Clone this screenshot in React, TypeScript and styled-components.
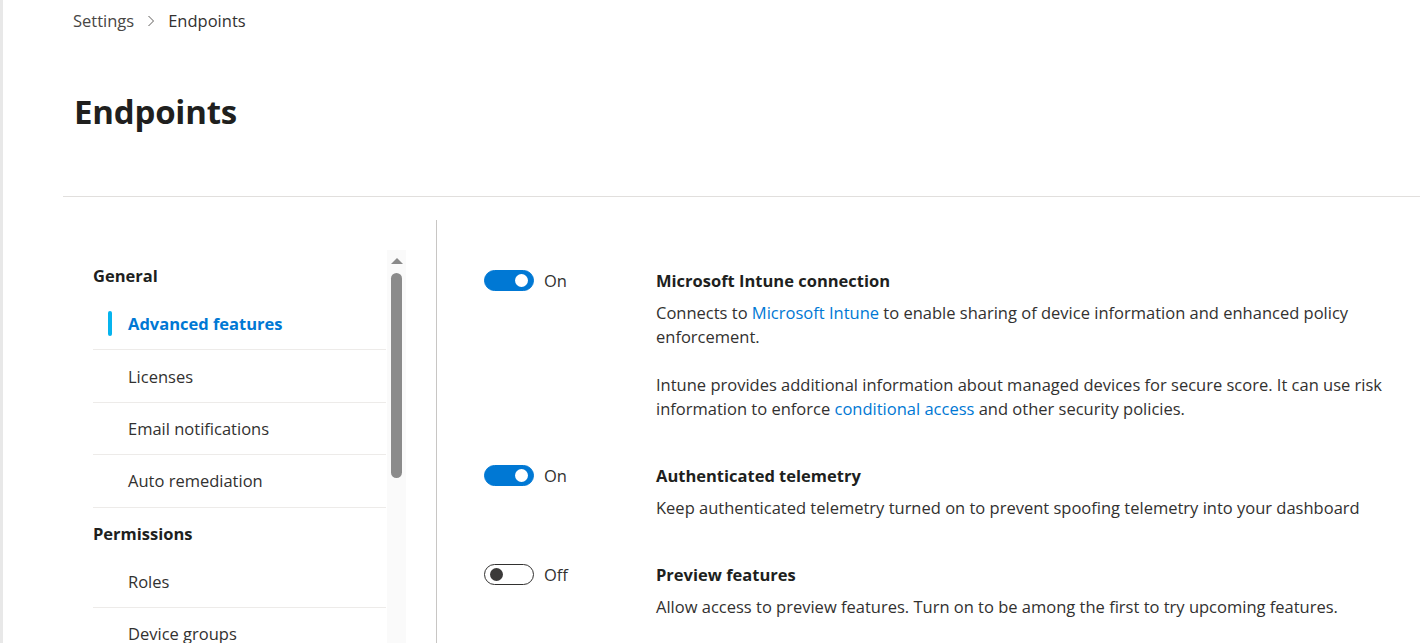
import React from "react";
import styled, { createGlobalStyle } from "styled-components";

const Global = createGlobalStyle`
  html, body { margin: 0; padding: 0; background: #ffffff; }
  body {
    font-family: "Open Sans", "Noto Sans", "Liberation Sans", sans-serif;
    color: #323130;
    overflow: hidden;
  }
  * { box-sizing: border-box; }
`;

const Page = styled.div`
  display: flex;
  width: 1420px;
  height: 643px;
  overflow: hidden;
`;

const Rail = styled.div`
  width: 3px;
  flex: none;
  background: #e8e8e8;
`;

const Main = styled.div`
  flex: 1;
  display: flex;
  flex-direction: column;
  padding-left: 60px;
  min-width: 0;
`;

const Header = styled.header`
  flex: none;
  padding: 9px 0 0 10px;
  height: 197px;
  border-bottom: 1px solid #e1dfdd;
`;

const Crumbs = styled.nav`
  display: flex;
  align-items: center;
  gap: 13px;
  font-size: 16.5px;
  line-height: 24px;
`;

const Crumb = styled.span<{ $current?: boolean }>`
  color: ${(p) => (p.$current ? "#323130" : "#484644")};
`;

const Title = styled.h1`
  margin: 56px 0 0 1px;
  font-size: 33px;
  line-height: 46px;
  font-weight: 700;
  color: #201f1e;
  letter-spacing: -0.2px;
`;

const Body = styled.div`
  flex: 1;
  display: flex;
  min-height: 0;
`;

const NavPane = styled.aside`
  margin-top: 23px;
  width: 374px;
  flex: none;
  border-right: 1px solid #c8c6c4;
  display: flex;
  padding: 30px 30px 0 30px;
  gap: 1px;
`;

const NavList = styled.div`
  width: 293px;
  flex: none;
  display: flex;
  flex-direction: column;
  overflow: hidden;
`;

const GroupHeader = styled.div`
  flex: none;
  height: 48px;
  padding-top: 14px;
  font-size: 16.5px;
  line-height: 24px;
  font-weight: 700;
  color: #201f1e;
`;

const NavItem = styled.div<{ $active?: boolean }>`
  position: relative;
  flex: none;
  height: 52.4px;
  display: flex;
  align-items: center;
  padding-left: 35px;
  border-bottom: 1px solid #edebe9;
  font-size: 16.5px;
  font-weight: ${(p) => (p.$active ? 700 : 400)};
  color: ${(p) => (p.$active ? "#0078d4" : "#323130")};
`;

const ActiveBar = styled.span`
  position: absolute;
  left: 15px;
  top: 13px;
  width: 4px;
  height: 25px;
  border-radius: 2px;
  background: #06b4ee;
`;

const Scrollbar = styled.div`
  width: 19px;
  flex: none;
  background: #fafafa;
  display: flex;
  flex-direction: column;
  align-items: center;
  padding-top: 8px;
`;

const ScrollArrow = styled.div`
  width: 0;
  height: 0;
  border-left: 6px solid transparent;
  border-right: 6px solid transparent;
  border-bottom: 6px solid #8a8a8a;
`;

const ScrollThumb = styled.div`
  margin-top: 9px;
  width: 11px;
  height: 205px;
  border-radius: 6px;
  background: #8b8b8b;
`;

const Content = styled.section`
  flex: 1;
  display: flex;
  flex-direction: column;
  gap: 43px;
  padding: 72px 20px 0 47px;
  min-width: 0;
`;

const Setting = styled.div`
  display: flex;
`;

const ToggleCol = styled.div`
  width: 172px;
  flex: none;
  display: flex;
  align-items: flex-start;
  gap: 10px;
  font-size: 16.5px;
  line-height: 24px;
  color: #323130;
`;

const Toggle = styled.span<{ $on: boolean }>`
  margin-top: 1px;
  width: 50px;
  height: 21px;
  border-radius: 11px;
  display: flex;
  align-items: center;
  justify-content: ${(p) => (p.$on ? "flex-end" : "flex-start")};
  padding: 0 5px;
  background: ${(p) => (p.$on ? "#0078d4" : "#ffffff")};
  border: 1px solid ${(p) => (p.$on ? "#0078d4" : "#323130")};
`;

const Knob = styled.span<{ $on: boolean }>`
  width: 13px;
  height: 13px;
  border-radius: 50%;
  background: ${(p) => (p.$on ? "#ffffff" : "#3b3a39")};
`;

const Text = styled.div`
  flex: 1;
  min-width: 0;
`;

const SettingTitle = styled.div`
  font-size: 16.5px;
  line-height: 24px;
  font-weight: 700;
  color: #201f1e;
  margin-bottom: 8px;
`;

const Desc = styled.p`
  margin: 0;
  font-size: 16.5px;
  line-height: 24px;
  color: #323130;
  & + & { margin-top: 24px; }
`;

const Link = styled.a`
  color: #0078d4;
  text-decoration: none;
`;

const Chevron = () => (
  <svg width="8" height="12" viewBox="0 0 8 12" fill="none">
    <path d="M1.5 1 L6.5 6 L1.5 11" stroke="#605e5c" strokeWidth="1" />
  </svg>
);

type Item = { label: string; active?: boolean };
const groups: { title: string; items: Item[] }[] = [
  {
    title: "General",
    items: [
      { label: "Advanced features", active: true },
      { label: "Licenses" },
      { label: "Email notifications" },
      { label: "Auto remediation" },
    ],
  },
  { title: "Permissions", items: [{ label: "Roles" }, { label: "Device groups" }] },
];

const ToggleField = ({ on }: { on: boolean }) => (
  <ToggleCol>
    <Toggle $on={on}>
      <Knob $on={on} />
    </Toggle>
    <span>{on ? "On" : "Off"}</span>
  </ToggleCol>
);

export default function App() {
  return (
    <>
      <Global />
      <Page>
        <Rail />
        <Main>
          <Header>
            <Crumbs>
              <Crumb>Settings</Crumb>
              <Chevron />
              <Crumb $current>Endpoints</Crumb>
            </Crumbs>
            <Title>Endpoints</Title>
          </Header>
          <Body>
            <NavPane>
              <NavList>
                {groups.map((g) => (
                  <React.Fragment key={g.title}>
                    <GroupHeader>{g.title}</GroupHeader>
                    {g.items.map((it) => (
                      <NavItem key={it.label} $active={it.active}>
                        {it.active && <ActiveBar />}
                        {it.label}
                      </NavItem>
                    ))}
                  </React.Fragment>
                ))}
              </NavList>
              <Scrollbar>
                <ScrollArrow />
                <ScrollThumb />
              </Scrollbar>
            </NavPane>
            <Content>
              <Setting>
                <ToggleField on />
                <Text>
                  <SettingTitle>Microsoft Intune connection</SettingTitle>
                  <Desc>
                    Connects to <Link>Microsoft Intune</Link> to enable sharing of device information and enhanced policy enforcement.
                  </Desc>
                  <Desc>
                    Intune provides additional information about managed devices for secure score. It can use risk information to enforce <Link>conditional access</Link> and other security policies.
                  </Desc>
                </Text>
              </Setting>
              <Setting>
                <ToggleField on />
                <Text>
                  <SettingTitle>Authenticated telemetry</SettingTitle>
                  <Desc>Keep authenticated telemetry turned on to prevent spoofing telemetry into your dashboard</Desc>
                </Text>
              </Setting>
              <Setting>
                <ToggleField on={false} />
                <Text>
                  <SettingTitle>Preview features</SettingTitle>
                  <Desc>Allow access to preview features. Turn on to be among the first to try upcoming features.</Desc>
                </Text>
              </Setting>
            </Content>
          </Body>
        </Main>
      </Page>
    </>
  );
}
